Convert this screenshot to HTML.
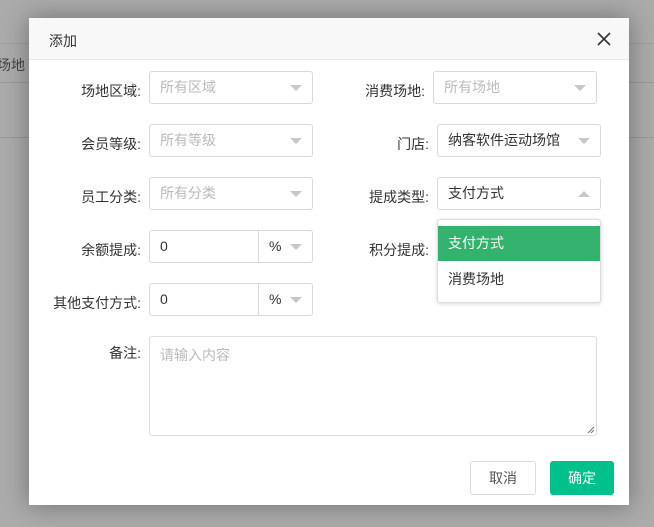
<!DOCTYPE html>
<html><head><meta charset="utf-8"><style>
*{box-sizing:border-box;margin:0;padding:0}
body{width:654px;height:527px;background:#ababab;position:relative;overflow:hidden;font-family:"Liberation Sans","Noto Sans CJK SC",sans-serif;font-size:14px;color:#333}
.bgline{position:absolute;left:0;right:0;height:1px;background:#999}
.dlg{position:absolute;left:29px;top:18px;width:600px;height:487px;background:#fff;box-shadow:0 0 24px rgba(0,0,0,.35)}
.hd{height:42px;background:#f8f8f8;border-bottom:1px solid #e8e8e8;position:relative}
.hd span{position:absolute;left:20px;top:13px;font-size:14px;color:#333}
.x{position:absolute;left:568px;top:14px}
.a{position:absolute}
.lbl{position:absolute;text-align:right;font-size:14px;color:#333;line-height:33px}
.sel{position:absolute;height:33px;border:1px solid #d9d9d9;border-radius:3px;background:#fff;line-height:31px;padding-left:10px;color:#bbb}
.sel.v{color:#333}
.tri{position:absolute;right:10px;top:13px;width:0;height:0;border-left:6px solid transparent;border-right:6px solid transparent;border-top:6px solid #c8c8c8}
.up{border-top:none;border-bottom:6px solid #c8c8c8}
.btn{position:absolute;height:34px;border-radius:3px;text-align:center;line-height:32px;font-size:14px}
</style></head><body>
<div class="bgline" style="top:43px;background:#a0a0a0"></div>
<div class="bgline" style="top:82px;background:#999"></div>
<div class="bgline" style="top:137px;background:#999"></div>
<div class="a" style="left:-3px;top:55px;color:#444;font-size:14px">场地</div>
<div class="dlg">
<div class="hd"><span>添加</span>
<svg class="x" width="14" height="14" viewBox="0 0 14 14"><path d="M1 1L13 13M13 1L1 13" stroke="#333" stroke-width="1.6"/></svg></div>
</div>
<div class="lbl" style="left:30px;width:111px;top:75px">场地区域:</div>
<div class="sel" style="left:149px;top:71px;width:164px">所有区域<i class="tri"></i></div>
<div class="lbl" style="left:310px;width:115px;top:75px">消费场地:</div>
<div class="sel" style="left:433px;top:71px;width:164px">所有场地<i class="tri"></i></div>

<div class="lbl" style="left:30px;width:111px;top:128px">会员等级:</div>
<div class="sel" style="left:149px;top:124px;width:164px">所有等级<i class="tri"></i></div>
<div class="lbl" style="left:310px;width:119px;top:128px">门店:</div>
<div class="sel v" style="left:437px;top:124px;width:164px">纳客软件运动场馆<i class="tri"></i></div>

<div class="lbl" style="left:30px;width:111px;top:181px">员工分类:</div>
<div class="sel" style="left:149px;top:177px;width:164px">所有分类<i class="tri"></i></div>
<div class="lbl" style="left:310px;width:119px;top:181px">提成类型:</div>
<div class="sel v" style="left:437px;top:177px;width:164px">支付方式<i class="tri up"></i></div>

<div class="lbl" style="left:30px;width:111px;top:234px">余额提成:</div>
<div class="sel v" style="left:149px;top:230px;width:110px;border-radius:3px 0 0 3px">0</div>
<div class="sel v" style="left:258px;top:230px;width:55px;border-radius:0 3px 3px 0">%<i class="tri"></i></div>
<div class="lbl" style="left:310px;width:119px;top:234px">积分提成:</div>

<div class="lbl" style="left:20px;width:121px;top:287px">其他支付方式:</div>
<div class="sel v" style="left:149px;top:283px;width:110px;border-radius:3px 0 0 3px">0</div>
<div class="sel v" style="left:258px;top:283px;width:55px;border-radius:0 3px 3px 0">%<i class="tri"></i></div>

<div class="a" style="left:437px;top:219px;width:164px;height:84px;background:#fff;border:1px solid #ddd;border-radius:3px;box-shadow:0 1px 4px rgba(0,0,0,.15)">
<div style="margin-top:6px;height:35px;background:#33b26e;color:#fff;line-height:35px;padding-left:10px">支付方式</div>
<div style="height:36px;line-height:36px;padding-left:10px;color:#333">消费场地</div>
</div>

<div class="lbl" style="left:30px;width:111px;top:343px;line-height:20px">备注:</div>
<div class="a" style="left:149px;top:336px;width:448px;height:100px;border:1px solid #ddd;border-radius:3px;padding:8px 10px;color:#bbb">请输入内容
<svg style="position:absolute;right:1px;bottom:1px" width="8" height="8"><path d="M7 1L1 7M7 4L4 7" stroke="#777"/></svg></div>

<div class="btn" style="left:470px;top:461px;width:66px;border:1px solid #ddd;color:#555;background:#fff">取消</div>
<div class="btn" style="left:550px;top:461px;width:64px;background:#00c08b;color:#fff;border:1px solid #00c08b">确定</div>
</body></html>
